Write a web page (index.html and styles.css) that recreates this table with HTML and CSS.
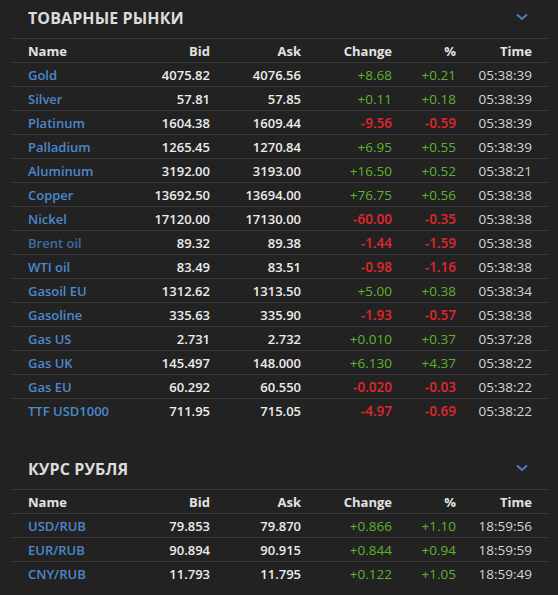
FILE: index.html
```html
<!DOCTYPE html>
<html lang="ru">
<head>
<meta charset="utf-8">
<title>Рынки</title>
<link rel="stylesheet" href="styles.css">
</head>
<body>
<section class="panel">
  <div class="panel-head">
    <h2 class="title">ТОВАРНЫЕ РЫНКИ</h2>
    <svg class="chev" width="12" height="8" viewBox="0 0 12 8"><polyline points="1,1.5 6,6 11,1.5" fill="none" stroke="#4b80b8" stroke-width="2"/></svg>
  </div>
  <div class="tbl">
    <div class="row head"><span class="name">Name</span><span>Bid</span><span>Ask</span><span>Change</span><span>%</span><span>Time</span></div>
    <div class="row"><span class="name">Gold</span><span class="num">4075.82</span><span class="num">4076.56</span><span class="up">+8.68</span><span class="up">+0.21</span><span class="time">05:38:39</span></div>
    <div class="row"><span class="name">Silver</span><span class="num">57.81</span><span class="num">57.85</span><span class="up">+0.11</span><span class="up">+0.18</span><span class="time">05:38:39</span></div>
    <div class="row"><span class="name">Platinum</span><span class="num">1604.38</span><span class="num">1609.44</span><span class="down">-9.56</span><span class="down">-0.59</span><span class="time">05:38:39</span></div>
    <div class="row"><span class="name">Palladium</span><span class="num">1265.45</span><span class="num">1270.84</span><span class="up">+6.95</span><span class="up">+0.55</span><span class="time">05:38:39</span></div>
    <div class="row"><span class="name">Aluminum</span><span class="num">3192.00</span><span class="num">3193.00</span><span class="up">+16.50</span><span class="up">+0.52</span><span class="time">05:38:21</span></div>
    <div class="row"><span class="name">Copper</span><span class="num">13692.50</span><span class="num">13694.00</span><span class="up">+76.75</span><span class="up">+0.56</span><span class="time">05:38:38</span></div>
    <div class="row"><span class="name">Nickel</span><span class="num">17120.00</span><span class="num">17130.00</span><span class="down">-60.00</span><span class="down">-0.35</span><span class="time">05:38:38</span></div>
    <div class="row"><span class="name visited">Brent oil</span><span class="num">89.32</span><span class="num">89.38</span><span class="down">-1.44</span><span class="down">-1.59</span><span class="time">05:38:38</span></div>
    <div class="row"><span class="name">WTI oil</span><span class="num">83.49</span><span class="num">83.51</span><span class="down">-0.98</span><span class="down">-1.16</span><span class="time">05:38:38</span></div>
    <div class="row"><span class="name">Gasoil EU</span><span class="num">1312.62</span><span class="num">1313.50</span><span class="up">+5.00</span><span class="up">+0.38</span><span class="time">05:38:34</span></div>
    <div class="row"><span class="name">Gasoline</span><span class="num">335.63</span><span class="num">335.90</span><span class="down">-1.93</span><span class="down">-0.57</span><span class="time">05:38:38</span></div>
    <div class="row"><span class="name">Gas US</span><span class="num">2.731</span><span class="num">2.732</span><span class="up">+0.010</span><span class="up">+0.37</span><span class="time">05:37:28</span></div>
    <div class="row"><span class="name">Gas UK</span><span class="num">145.497</span><span class="num">148.000</span><span class="up">+6.130</span><span class="up">+4.37</span><span class="time">05:38:22</span></div>
    <div class="row"><span class="name">Gas EU</span><span class="num">60.292</span><span class="num">60.550</span><span class="down">-0.020</span><span class="down">-0.03</span><span class="time">05:38:22</span></div>
    <div class="row last"><span class="name">TTF USD1000</span><span class="num">711.95</span><span class="num">715.05</span><span class="down">-4.97</span><span class="down">-0.69</span><span class="time">05:38:22</span></div>
  </div>
</section>
<section class="panel second">
  <div class="panel-head">
    <h2 class="title">КУРС РУБЛЯ</h2>
    <svg class="chev" width="12" height="8" viewBox="0 0 12 8"><polyline points="1,1.5 6,6 11,1.5" fill="none" stroke="#4b80b8" stroke-width="2"/></svg>
  </div>
  <div class="tbl">
    <div class="row head"><span class="name">Name</span><span>Bid</span><span>Ask</span><span>Change</span><span>%</span><span>Time</span></div>
    <div class="row"><span class="name">USD/RUB</span><span class="num">79.853</span><span class="num">79.870</span><span class="up">+0.866</span><span class="up">+1.10</span><span class="time">18:59:56</span></div>
    <div class="row"><span class="name">EUR/RUB</span><span class="num">90.894</span><span class="num">90.915</span><span class="up">+0.844</span><span class="up">+0.94</span><span class="time">18:59:59</span></div>
    <div class="row last"><span class="name">CNY/RUB</span><span class="num">11.793</span><span class="num">11.795</span><span class="up">+0.122</span><span class="up">+1.05</span><span class="time">18:59:49</span></div>
  </div>
</section>
</body>
</html>
```
FILE: styles.css
```css
html, body {
  margin: 0;
  padding: 0;
  background: #222222;
}
body {
  font-family: "Open Sans", "Noto Sans", sans-serif;
  font-size: 13px;
  color: #e6e6e6;
  padding: 0 10px 0 12px;
}
.panel {
  display: flex;
  flex-direction: column;
}
.panel.second {
  margin-top: 28px;
}
.panel-head {
  height: 39px;
  display: flex;
  align-items: center;
  justify-content: space-between;
  padding: 0 20px 3px 16px;
  border-bottom: 1px solid #383838;
  box-sizing: border-box;
}
.title {
  margin: 0;
  font-size: 16px;
  font-weight: 700;
  color: #dcdcdc;
  letter-spacing: 0.1px;
}
.chev {
  display: block;
  margin-top: -1px;
}
.tbl {
  display: flex;
  flex-direction: column;
}
.row {
  display: grid;
  grid-template-columns: 100px 82px 91px 91px 64px 76px;
  height: 24px;
  align-items: center;
  padding: 0 16px;
  border-bottom: 1px solid #383838;
  box-sizing: border-box;
  text-align: right;
  white-space: nowrap;
}
.row.last {
  border-bottom: none;
}
.row.head {
  font-weight: 700;
  color: #e2e2e2;
}
.name {
  text-align: left;
  font-weight: 600;
  color: #4b88cc;
}
.row.head .name {
  color: #e2e2e2;
  font-weight: 700;
}
.name.visited {
  color: #3d6ca3;
}
.num {
  font-weight: 600;
  color: #ececec;
}
.up {
  color: #5db42c;
  font-size: 13.5px;
}
.down {
  color: #e3262c;
  font-weight: 600;
  font-size: 13.5px;
}
.time {
  color: #d4d4d4;
  font-size: 13.5px;
}
```
